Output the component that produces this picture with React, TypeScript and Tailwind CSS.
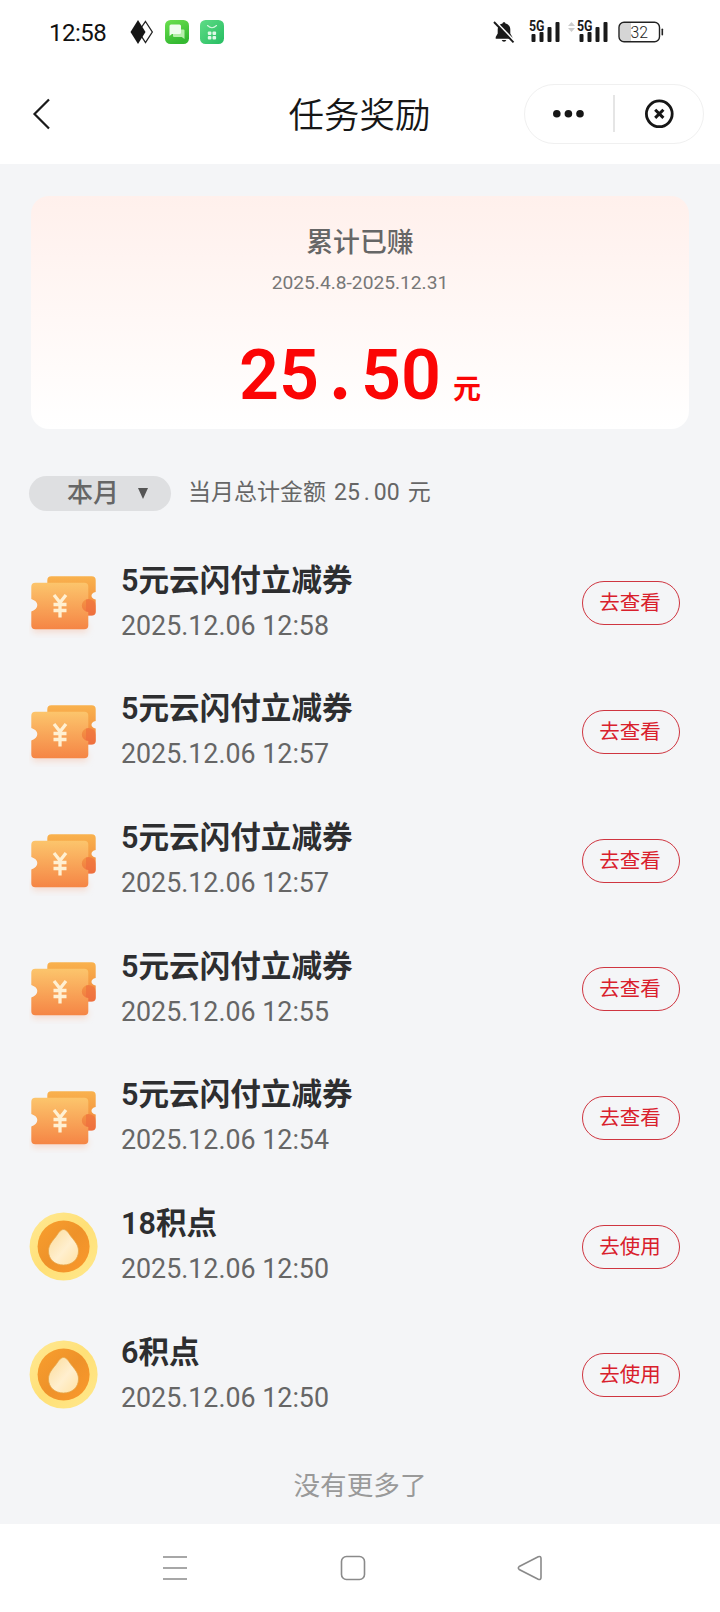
import type { ReactNode } from 'react';

type Reward = {
  kind: 'coupon' | 'points';
  title: string;
  time: string;
};

const rewards: Reward[] = [
  { kind: 'coupon', title: '5元云闪付立减券', time: '2025.12.06 12:58' },
  { kind: 'coupon', title: '5元云闪付立减券', time: '2025.12.06 12:57' },
  { kind: 'coupon', title: '5元云闪付立减券', time: '2025.12.06 12:57' },
  { kind: 'coupon', title: '5元云闪付立减券', time: '2025.12.06 12:55' },
  { kind: 'coupon', title: '5元云闪付立减券', time: '2025.12.06 12:54' },
  { kind: 'points', title: '18积点', time: '2025.12.06 12:50' },
  { kind: 'points', title: '6积点', time: '2025.12.06 12:50' },
];

const Signal = () => (
  <svg className="overflow-visible" width="32" height="24" viewBox="0 0 32 24" fill="#1a1a1a">
    <text x="0" y="11" fontSize="14" fontWeight="700" textLength="15.5" lengthAdjust="spacingAndGlyphs">
      5G
    </text>
    <rect x="2.5" y="14" width="4" height="8" rx="1" />
    <rect x="10.5" y="12" width="4" height="10" rx="1" />
    <rect x="18.5" y="7" width="4" height="15" rx="1" />
    <rect x="26.5" y="2" width="4" height="20" rx="1" />
  </svg>
);

const StatusBar = () => (
  <div className="flex h-16 items-center justify-between pr-[56px] pl-[49px]">
    <div className="flex items-center">
      <span className="w-[81px] pt-[2px] text-[24px] leading-6 tracking-[-0.5px] text-[#111]">12:58</span>
      <svg width="24" height="26" viewBox="0 0 24 26">
        <path d="M15.5 2.5L22.3 13L15.5 23.5L11 16.5L13.5 13L11 9Z" fill="#fff" stroke="#222" strokeWidth="1.3" />
        <path d="M8 1L15.5 13L8 25L0.5 13Z" fill="#161616" />
      </svg>
      <svg className="ml-[11px]" width="24" height="24" viewBox="0 0 24 24">
        <defs>
          <linearGradient id="msg" x1="0" y1="0" x2="0.4" y2="1">
            <stop offset="0" stopColor="#6ce04f" />
            <stop offset="1" stopColor="#35b932" />
          </linearGradient>
        </defs>
        <rect width="24" height="24" rx="5.5" fill="url(#msg)" />
        <path d="M9 9.5H18.5Q19.5 9.5 19.5 10.5V19L16.8 17H9Q8 17 8 16V10.5Q8 9.5 9 9.5Z" fill="#b6efab" />
        <path d="M6 4.5H14.5Q16 4.5 16 6V12.5Q16 14 14.5 14H7L4.5 16V6Q4.5 4.5 6 4.5Z" fill="#f0fcee" />
      </svg>
      <svg className="ml-[11px]" width="24" height="24" viewBox="0 0 24 24">
        <defs>
          <linearGradient id="shop" x1="0" y1="0" x2="1" y2="1">
            <stop offset="0" stopColor="#5fdc86" />
            <stop offset="1" stopColor="#26bd62" />
          </linearGradient>
        </defs>
        <rect width="24" height="24" rx="5.5" fill="url(#shop)" />
        <path d="M7.5 5.5Q12 10 16.5 5.5" fill="none" stroke="#d5f7df" strokeWidth="1.1" strokeLinecap="round" />
        <g fill="#e0f9e7">
          <rect x="7.8" y="11.5" width="3.6" height="3.6" rx="1" />
          <rect x="12.5" y="11.5" width="3.6" height="3.6" rx="1" />
          <rect x="7.8" y="16" width="3.6" height="3.6" rx="1" />
          <rect x="12.5" y="16" width="3.6" height="3.6" rx="1" />
        </g>
      </svg>
    </div>

    <div className="flex items-center">
      <svg width="22" height="24" viewBox="0 0 22 24">
        <path
          d="M11 2.2C11.9 2.2 12.3 2.8 12.5 3.4C15.7 4.2 17.3 6.5 17.3 9.6V13.5L19.3 17V18.8H2.7V17L4.7 13.5V9.6C4.7 6.5 6.3 4.2 9.5 3.4C9.7 2.8 10.1 2.2 11 2.2Z"
          fill="#1a1a1a"
        />
        <path d="M8.7 20H13.3Q12.8 21.8 11 21.8T8.7 20Z" fill="#1a1a1a" />
        <path d="M2.2 1L21.7 21.3" stroke="#fff" strokeWidth="1.8" />
        <path d="M1 2L20.5 22.3" stroke="#1a1a1a" strokeWidth="1.9" />
      </svg>
      <div className="ml-[14px] flex">
        <Signal />
      </div>
      <svg className="mb-[11px] ml-[7px]" width="7" height="10" viewBox="0 0 7 10" fill="#ccc">
        <path d="M3.5 0L7 4H0Z" />
        <path d="M3.5 10L7 6H0Z" />
      </svg>
      <div className="ml-[2px] flex">
        <Signal />
      </div>
      <svg className="ml-[8px]" width="47" height="22" viewBox="0 0 47 22">
        <path d="M7 2H14V20H7Q2.5 20 2.5 15.5V6.5Q2.5 2 7 2Z" fill="#d5d5d5" />
        <rect x="2" y="1.2" width="40.5" height="19.6" rx="5" fill="none" stroke="#222" strokeWidth="1.4" />
        <rect x="44.5" y="7.5" width="1.6" height="7" rx="0.8" fill="#222" />
        <text x="13.5" y="17" fontSize="17" fontWeight="300" fill="#222" textLength="17.5" lengthAdjust="spacingAndGlyphs">
          32
        </text>
      </svg>
    </div>
  </div>
);

const Header = () => (
  <header className="grid h-[100px] grid-cols-[200px_1fr_200px] items-center">
    <svg className="ml-[32px]" width="20" height="32" viewBox="0 0 20 32">
      <path d="M17 1.5L2.5 16L17 30.5" fill="none" stroke="#1a1a1a" strokeWidth="2.2" />
    </svg>
    <h1 className="mt-[4px] -ml-[1px] text-center text-[35.5px] leading-[44px] font-[350] text-[#161616]">任务奖励</h1>
    <div className="ml-[4px] h-[60px] w-[180px] rounded-full border border-[#f0f0f0]">
      <svg width="178" height="58" viewBox="0 0 178 58">
        <g fill="#161616">
          <circle cx="31.8" cy="28.8" r="3.8" />
          <circle cx="43.4" cy="28.8" r="3.8" />
          <circle cx="55" cy="28.8" r="3.8" />
        </g>
        <path d="M89 10V47" stroke="#dcdcdc" strokeWidth="1.5" />
        <circle cx="134.3" cy="28.8" r="12.9" fill="none" stroke="#161616" strokeWidth="2.8" />
        <path d="M130.2 24.7L138.4 32.9M138.4 24.7L130.2 32.9" stroke="#161616" strokeWidth="3" />
      </svg>
    </div>
  </header>
);

const SummaryCard = () => (
  <section className="mx-[31px] mt-8 flex h-[233px] flex-col items-center rounded-[18px] bg-linear-to-b from-[#fff0ec] to-white pt-[29px]">
    <h2 className="text-[26.88px] leading-[36px] font-medium text-[#666]">累计已赚</h2>
    <p className="mt-[8px] text-[19.2px] leading-[28px] text-[#777]">2025.4.8-2025.12.31</p>
    <div className="mt-[43px] flex items-baseline text-[#fb0505]">
      <span className="flex items-baseline text-[70px] leading-[70px] font-semibold">
        <span>25</span>
        <span className="w-[42px] text-center font-[Lato,sans-serif] text-[82px] leading-[40px] font-bold">.</span>
        <span>50</span>
      </span>
      <span className="ml-[12px] text-[28px] leading-[36px] font-bold">元</span>
    </div>
  </section>
);

const MonthFilter = () => (
  <div className="mt-[46px] ml-[29px] flex h-[36px] items-center">
    <button className="flex h-[35px] w-[142px] items-center rounded-full bg-[#dedfe1] pl-[38px] text-[26px] leading-[34px] font-medium text-[#666]">
      本月
      <svg className="ml-[19px]" width="10" height="11" viewBox="0 0 10 11">
        <path d="M0 0H10L5 11Z" fill="#555" />
      </svg>
    </button>
    <p className="ml-[17px] flex text-[23px] leading-[36px] text-[#666]">
      <span>当月总计金额</span>
      <span className="ml-[8px]">25</span>
      <span className="w-[14px] text-center">.</span>
      <span>00</span>
      <span className="ml-[8px]">元</span>
    </p>
  </div>
);

const CouponIcon = () => (
  <svg width="70" height="70" viewBox="0 0 70 70">
    <defs>
      <linearGradient id="front" x1="0" y1="0" x2="0" y2="1">
        <stop offset="0" stopColor="#fcc56c" />
        <stop offset="1" stopColor="#f58545" />
      </linearGradient>
      <linearGradient id="back" x1="0" y1="0" x2="0" y2="1">
        <stop offset="0" stopColor="#f9b24e" />
        <stop offset="0.5" stopColor="#f59c44" />
        <stop offset="1" stopColor="#f07440" />
      </linearGradient>
      <filter id="soft" x="-20%" y="-50%" width="140%" height="200%">
        <feGaussianBlur stdDeviation="3" />
      </filter>
    </defs>
    <rect x="3" y="54" width="56" height="11" rx="4" fill="#f6c6b0" opacity="0.5" filter="url(#soft)" />
    <path
      d="M22.3 8.2H62.7Q66.7 8.2 66.7 12.2V24Q62.5 25 62.5 27.7T66.700 31.500V43.500Q66.7 47.5 62.7 47.5H18.3V12.2Q18.3 8.2 22.3 8.2Z"
      fill="url(#back)"
    />
    <path d="M59.3 31Q66.7 31.5 66.7 38V43.5Q66.7 47.5 62.7 47.5H57V31Z" fill="#ef6c3d" opacity="0.6" />
    <path
      d="M6.3 14.8H55.3Q59.3 14.8 59.3 18.8V31A6.5 6.5 0 0 0 59.3 44V57.2Q59.3 61.2 55.3 61.2H6.3Q2.3 61.2 2.3 57.2V43.5Q8.3 41 8.3 37T2.3 31V18.8Q2.3 14.8 6.3 14.8Z"
      fill="url(#front)"
    />
    <path
      d="M25 27L31 34.5L37 27M24.5 36.5H37.5M24.5 42.5H37.5M31 34V49.5"
      fill="none"
      stroke="#fff0d2"
      strokeWidth="3.3"
    />
  </svg>
);

const PointsIcon = () => (
  <svg width="70" height="70" viewBox="0 0 70 70">
    <defs>
      <linearGradient id="ring" x1="0" y1="0" x2="1" y2="1">
        <stop offset="0" stopColor="#ffe994" />
        <stop offset="0.5" stopColor="#ffe077" />
        <stop offset="1" stopColor="#ffe88c" />
      </linearGradient>
      <linearGradient id="disc" x1="0" y1="0" x2="1" y2="1">
        <stop offset="0" stopColor="#f99f2e" />
        <stop offset="0.5" stopColor="#ee922a" />
        <stop offset="1" stopColor="#fb992c" />
      </linearGradient>
      <linearGradient id="drop" x1="0" y1="0" x2="1" y2="1">
        <stop offset="0" stopColor="#fbdb98" />
        <stop offset="0.55" stopColor="#ffefcf" />
        <stop offset="1" stopColor="#ffe2a4" />
      </linearGradient>
    </defs>
    <circle cx="34.6" cy="34.5" r="34" fill="url(#ring)" />
    <circle cx="34.6" cy="34.5" r="26" fill="url(#disc)" />
    <path
      d="M34.5 17.5C37 17.5 39 20 42 24.5C46 29.5 49.5 33 49.5 39C49.5 47.5 43 53 34.5 53S19.5 47.5 19.5 39C19.5 33 23 29.5 27 24.5C30 20 32 17.5 34.5 17.5Z"
      fill="url(#drop)"
      stroke="#e6a548"
      strokeWidth="0.8"
    />
  </svg>
);

const ActionButton = ({ children }: { children: ReactNode }) => (
  <button className="mr-[40px] h-[44px] w-[98px] rounded-full border border-[#cf3540] pr-[2px] text-center text-[20.5px] leading-[42px] text-[#d9202c]">
    {children}
  </button>
);

const RewardRow = ({ reward }: { reward: Reward }) => (
  <li className="flex h-[128.65px] items-center pl-[29px]">
    {reward.kind === 'coupon' ? <CouponIcon /> : <PointsIcon />}
    <div className="ml-[22px] flex-1">
      <h3 className="text-[30.6px] leading-[42px] font-semibold text-[#2d2e30]">{reward.title}</h3>
      <p className="mt-[3px] text-[26.8px] leading-[42px] text-[#666]">{reward.time}</p>
    </div>
    <ActionButton>{reward.kind === 'coupon' ? '去查看' : '去使用'}</ActionButton>
  </li>
);

const NavBar = () => (
  <nav className="flex h-[88px] items-center justify-between bg-white pr-[177px] pl-[162px]">
    <svg width="26" height="26" viewBox="0 0 26 26" stroke="#8a8a8a" strokeWidth="1.6">
      <path d="M1 2H25M1 13H25M1 24H25" />
    </svg>
    <svg width="26" height="26" viewBox="0 0 26 26" fill="none" stroke="#8a8a8a" strokeWidth="1.6">
      <rect x="1.5" y="1.5" width="23" height="23" rx="5" />
    </svg>
    <svg width="26" height="26" viewBox="0 0 26 26" fill="none" stroke="#8a8a8a" strokeWidth="1.6">
      <path d="M2.2 11.5L21.2 1.8Q24 0.8 24 3.5V22.5Q24 25.2 21.2 24.2L2.2 14.5Q0.5 13 2.2 11.5Z" />
    </svg>
  </nav>
);

const App = () => {
  return (
    <div className="flex h-[1612px] w-[720px] flex-col overflow-hidden bg-[#f4f5f7] font-[Roboto,'Noto_Sans_CJK_SC',sans-serif]">
      <div className="bg-white">
        <StatusBar />
        <Header />
      </div>
      <main className="flex-1">
        <SummaryCard />
        <MonthFilter />
        <ul className="mt-[28px]">
          {rewards.map((reward, i) => (
            <RewardRow key={i} reward={reward} />
          ))}
        </ul>
        <p className="mt-[27px] text-center text-[26.6px] leading-[40px] text-[#999]">没有更多了</p>
      </main>
      <NavBar />
    </div>
  );
};

export default App;
